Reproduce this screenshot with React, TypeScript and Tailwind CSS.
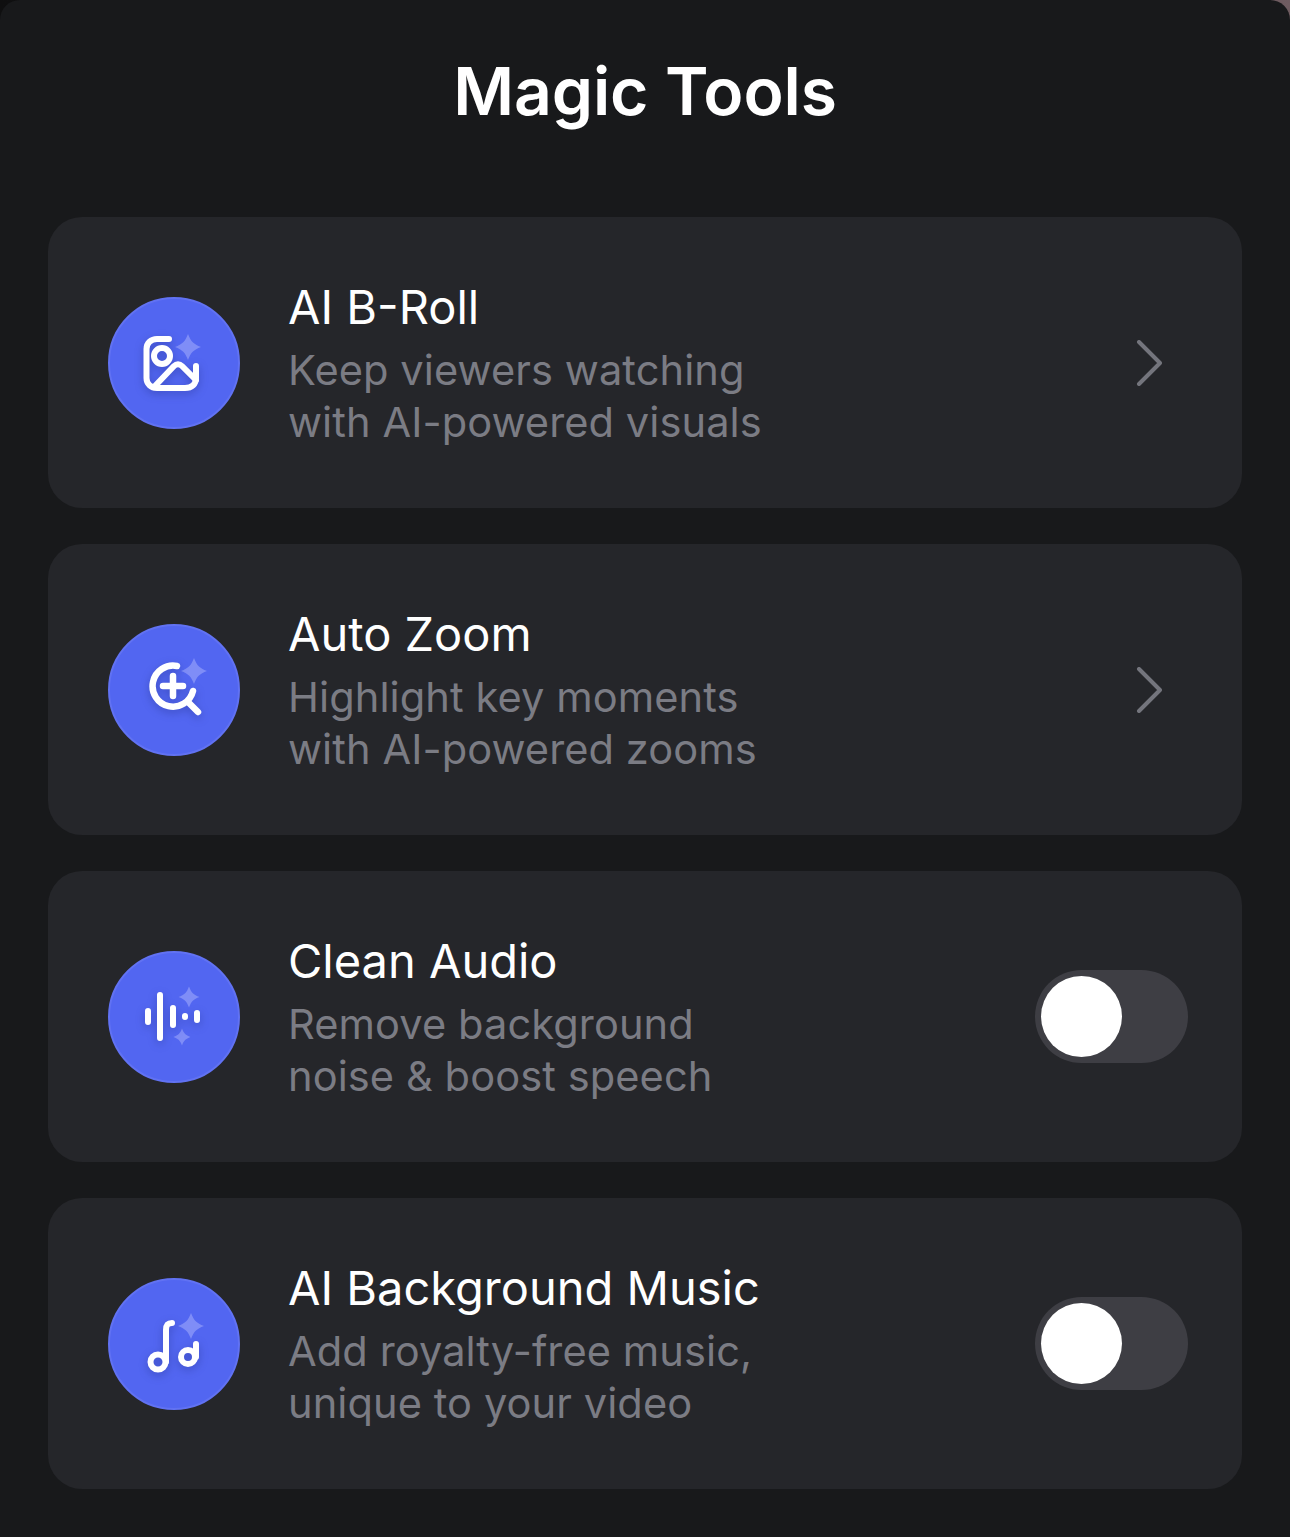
import type { ReactNode } from 'react';

const Sparkle = ({ cx, cy, r }: { cx: number; cy: number; r: number }) => (
  <path
    fill="#7f8df7"
    stroke="none"
    d={`M${cx} ${cy - r}C${cx + r * 0.22} ${cy - r * 0.42} ${cx + r * 0.42} ${cy - r * 0.22} ${cx + r} ${cy}C${cx + r * 0.42} ${cy + r * 0.22} ${cx + r * 0.22} ${cy + r * 0.42} ${cx} ${cy + r}C${cx - r * 0.22} ${cy + r * 0.42} ${cx - r * 0.42} ${cy + r * 0.22} ${cx - r} ${cy}C${cx - r * 0.42} ${cy - r * 0.22} ${cx - r * 0.22} ${cy - r * 0.42} ${cx} ${cy - r}Z`}
  />
);

// all icons are drawn in the 132x132 box of the blue circle
function IconCircle({ children }: { children: ReactNode }) {
  return (
    <div className="h-[132px] w-[132px] shrink-0 rounded-full border-2 border-[#6172f3] bg-[#5266f1]">
      <svg
        viewBox="0 0 132 132"
        className="-m-[2px] h-[132px] w-[132px]"
        fill="none"
        stroke="#fff"
        strokeLinecap="round"
        strokeLinejoin="round"
      >
        {children}
      </svg>
    </div>
  );
}

const white = 'drop-shadow-[0_3px_4px_rgba(30,40,120,0.35)]';

const ImageIcon = () => (
  <>
    <Sparkle cx={80} cy={50} r={13} />
    <g strokeWidth={6} className={white}>
      <path d="M61 42H49C43 42 38.500 46 38.500 52V81C38.500 87 43 91 49 91H77C84 91 88 87 88 81V69" />
      <circle cx={54} cy={59} r={8} />
      <path d="M46 90L66 69C68.500 66.500 71.500 66.500 74 69L88 83" />
    </g>
  </>
);

const ZoomIcon = () => (
  <>
    <Sparkle cx={86} cy={47} r={13} />
    <g strokeWidth={6.5} className={white}>
      <path d="M69 42A20.500 20.500 0 1 0 85 67" />
      <path d="M55 62H75M65 52V72M80 78L90 88" />
    </g>
  </>
);

const WaveIcon = () => (
  <>
    <Sparkle cx={81} cy={46} r={10.500} />
    <Sparkle cx={74} cy={86} r={8.500} />
    <g strokeWidth={6} className={white}>
      <path d="M40 60V71M52 44V87M65 57V74M77 65V66M89 62V69" />
    </g>
  </>
);

const MusicIcon = () => (
  <>
    <Sparkle cx={83} cy={48} r={13} />
    <g strokeWidth={6} className={white}>
      <circle cx={50} cy={84} r={7.500} />
      <path d="M58 84V52C58 47 60 45 64 45" />
      <circle cx={80} cy={79} r={7} />
      <path d="M88 79V66" />
    </g>
  </>
);

const Chevron = () => (
  <svg viewBox="0 0 26 46" className="mr-[80px] h-[46px] w-[26px]" fill="none" stroke="#74757d" strokeWidth={4} strokeLinecap="round" strokeLinejoin="round">
    <path d="M3 2L24 23L3 44" />
  </svg>
);

const Toggle = () => (
  <div className="mr-[54px] flex h-[93px] w-[153px] items-center rounded-full bg-[#3e3e44] pl-[6px]">
    <div className="h-[81px] w-[81px] rounded-full bg-white" />
  </div>
);

const tools = [
  { title: 'AI B-Roll', lines: ['Keep viewers watching', 'with AI-powered visuals'], icon: <ImageIcon />, end: <Chevron /> },
  { title: 'Auto Zoom', lines: ['Highlight key moments', 'with AI-powered zooms'], icon: <ZoomIcon />, end: <Chevron /> },
  { title: 'Clean Audio', lines: ['Remove background', 'noise & boost speech'], icon: <WaveIcon />, end: <Toggle /> },
  { title: 'AI Background Music', lines: ['Add royalty-free music,', 'unique to your video'], icon: <MusicIcon />, end: <Toggle /> },
];

export default function App() {
  return (
    <div className="h-[1537px] w-full overflow-hidden bg-gradient-to-r from-[#0f0f10] via-[#18191b] to-[#6f5c61] font-['Inter',sans-serif]">
      <div className="h-full rounded-t-[20px] bg-[#18191b] px-12">
        <h1 className="pt-[47px] pb-[82px] text-center text-[66px] leading-[88px] font-semibold tracking-[-0.1px] text-white">Magic Tools</h1>
        <div className="flex flex-col gap-[36px]">
          {tools.map((t) => (
            <div key={t.title} className="flex h-[291px] items-center justify-between rounded-[34px] bg-[#25262a] pl-[60px]">
              <div className="flex items-center gap-[49px]">
                <IconCircle>{t.icon}</IconCircle>
                <div className="-ml-px pt-[3px]">
                  <div className="text-[47px] leading-[52px] text-white">{t.title}</div>
                  <div className="pt-[11px] text-[41.600px] leading-[52px] tracking-[0.08px] text-[#7b7c84]">
                    {t.lines.map((l) => (
                      <div key={l}>{l}</div>
                    ))}
                  </div>
                </div>
              </div>
              {t.end}
            </div>
          ))}
        </div>
      </div>
    </div>
  );
}
